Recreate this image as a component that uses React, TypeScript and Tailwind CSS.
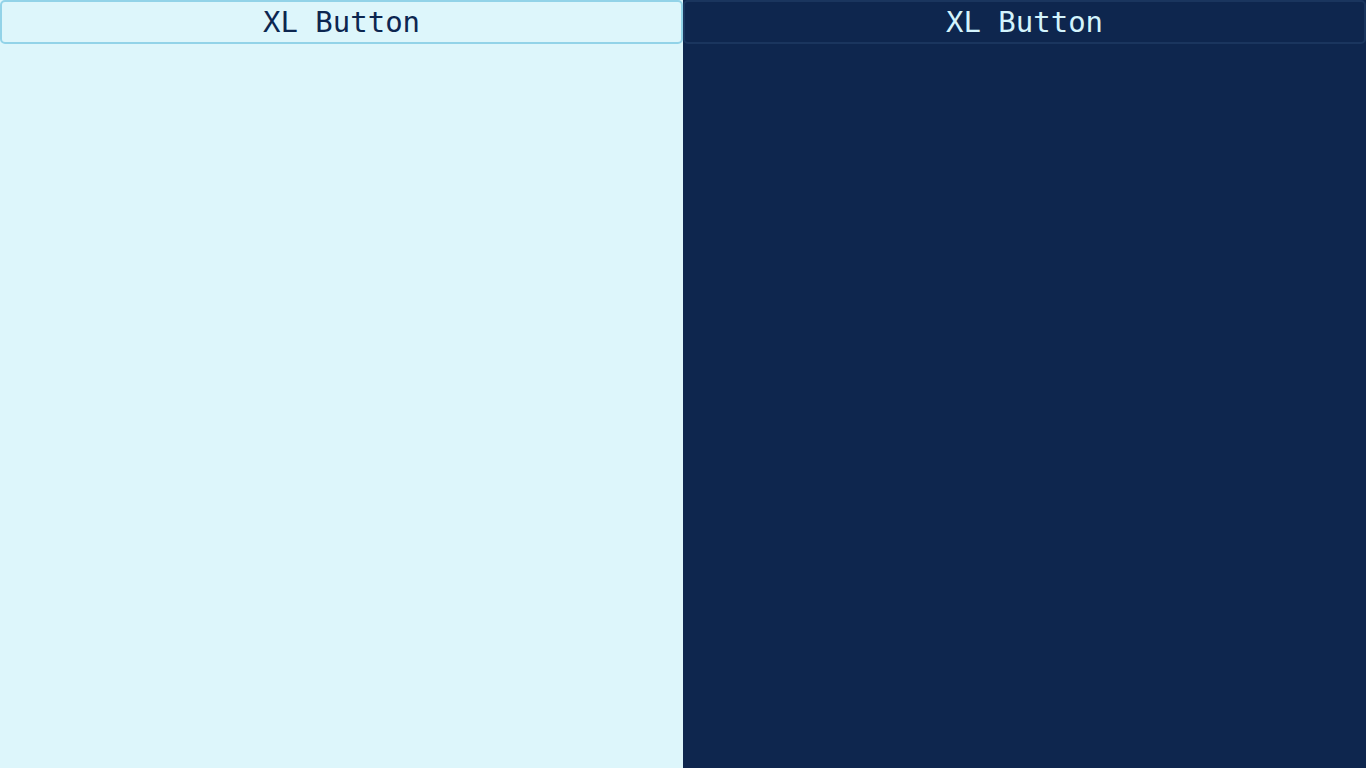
export default function App() {
  return (
    <div className="grid grid-cols-2 h-screen w-full" style={{ fontFamily: '"DejaVu Sans Mono", monospace' }}>
      <div className="bg-[#ddf6fb]">
        <button className="w-full h-[44px] rounded-[5px] border-2 border-[#92d3e8] bg-[#ddf6fb] text-[#0c2650] text-[29px] leading-none flex items-center justify-center">
          XL Button
        </button>
      </div>
      <div className="bg-[#0e264e]">
        <button className="w-full h-[44px] rounded-[5px] border-2 border-[#1a355e] bg-[#0e264e] text-[#d4f4fd] text-[29px] leading-none flex items-center justify-center">
          XL Button
        </button>
      </div>
    </div>
  )
}
